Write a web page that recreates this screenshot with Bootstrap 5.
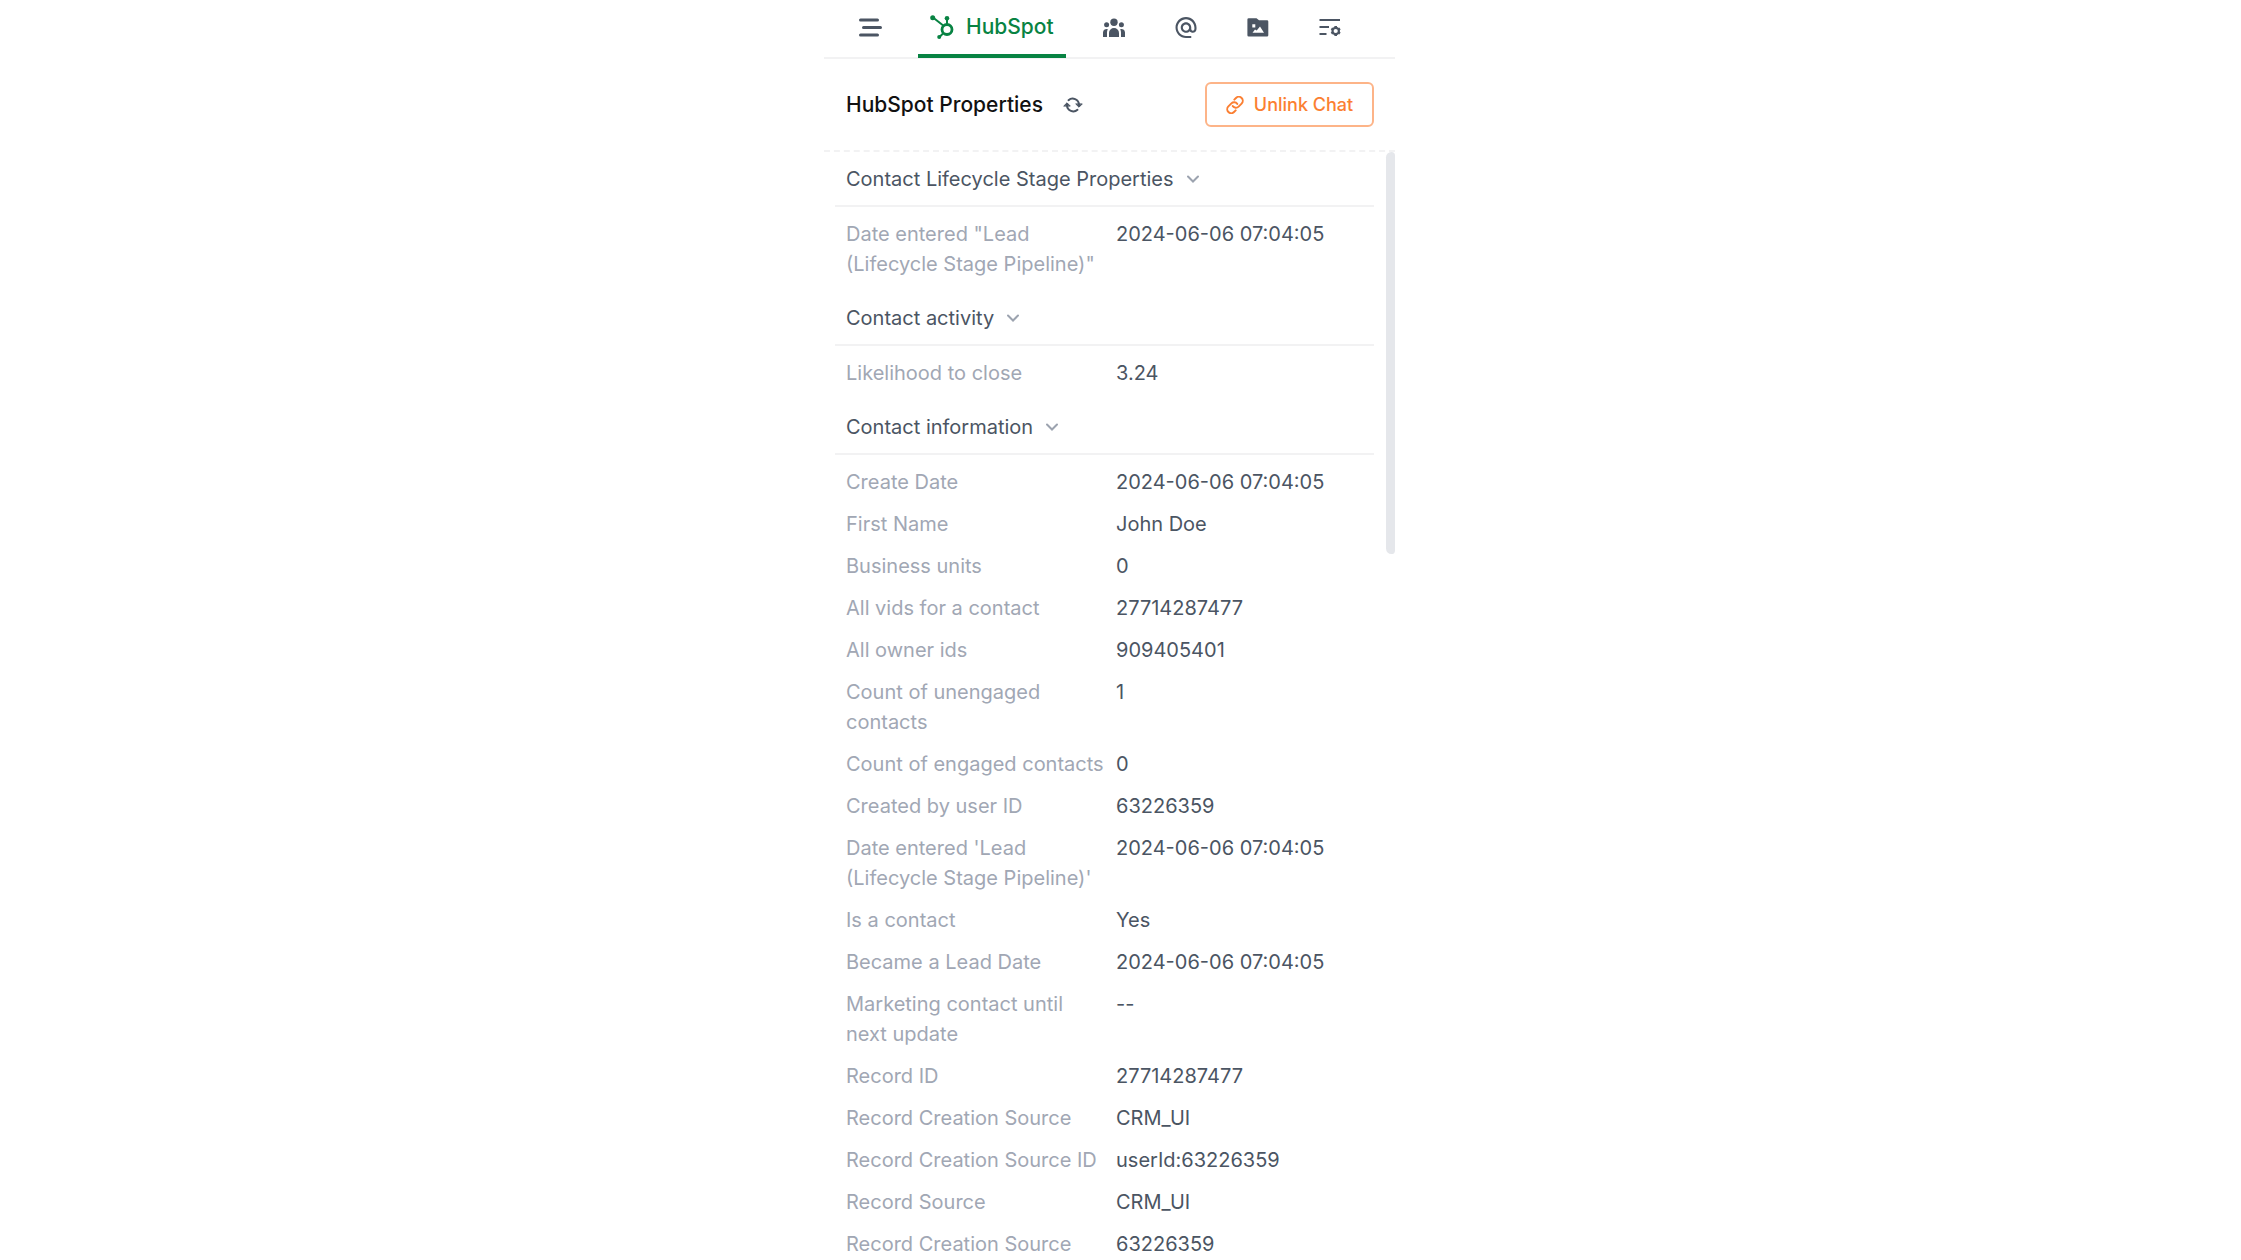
<!DOCTYPE html>
<html lang="en">
<head>
<meta charset="utf-8">
<meta name="viewport" content="width=device-width, initial-scale=1">
<title>HubSpot Properties</title>
<link href="https://cdn.jsdelivr.net/npm/bootstrap@5.3.0/dist/css/bootstrap.min.css" rel="stylesheet">
<style>
  :root { --ink: #4b5563; --muted: #a1a7b4; --line: #f2f2f3; --brand: #088343; --warm: #fb7f32; }
  body { font-family: Inter, "Liberation Sans", sans-serif; font-size: 20px; line-height: 30px; color: var(--ink); background: #fff; }
  .stage { padding-right: 22px; }
  .panel { width: 100%; max-width: 571px; }
  .topbar { padding: 0 22px; height: 59px; gap: 24px; border-bottom: 2px solid var(--line); }
  .tab-btn { border: 0; background: none; color: var(--ink); padding: 0 12px; height: 54px; font-size: 21px; font-weight: 500; }
  .tab-btn svg { width: 24px; height: 24px; display: block; }
  .tab-slot { height: 58px; border-bottom: 4px solid transparent; }
  .tab-slot.current { border-color: var(--brand); }
  .tab-slot.current .tab-btn { color: var(--brand); gap: 12px; }
  .panel-head { height: 93px; padding: 0 21px 0 22px; border-bottom: 2px dashed var(--line); gap: 20px; }
  .panel-title { font-size: 21px; line-height: 30px; color: #111; font-weight: 500; }
  .title-row { gap: 20px; }
  .bare { border: 0; background: none; padding: 0; color: inherit; }
  .unlink { --bs-btn-color: var(--warm); --bs-btn-border-color: #fdb488; --bs-btn-hover-color: #fff; --bs-btn-hover-bg: var(--warm); --bs-btn-border-width: 2px; --bs-btn-border-radius: 6px;
    --bs-btn-font-size: 18px; --bs-btn-font-weight: 500; width: 169px; height: 45px; padding: 0; gap: 10px; }
  .groups { padding-left: 11px; min-width: 0; }
  .group-head { height: 55px; padding: 0 0 0 11px; border-bottom: 2px solid var(--line); font-size: 20px; gap: 13px; }
  .fields { padding: 12px 0 12px 11px; gap: 12px; font-size: 20px; }
  .field-name { width: 270px; padding-right: 8px; color: var(--muted); font-weight: 400; flex: none; }
  .track { width: 9px; margin-left: 12px; flex: none; }
  .thumb { height: 36.3%; background: #e5e7eb; border-radius: 6px 4px 4px 6px; }
</style>
<script src="https://cdn.jsdelivr.net/npm/bootstrap@5.3.0/dist/js/bootstrap.bundle.min.js"></script>
</head>
<body>
<div class="stage d-flex justify-content-center vh-100 overflow-hidden">
<main class="panel d-flex flex-column h-100">
  <nav class="topbar d-flex flex-shrink-0" aria-label="Panel tabs">
    <div class="tab-slot"><button class="tab-btn d-flex align-items-center" type="button" aria-label="Menu">
      <svg viewBox="0 0 24 24" fill="none" stroke="currentColor" stroke-width="3" stroke-linecap="round"><path d="M2.500 5h17M5.500 12.500h17M2.500 20h17"/></svg></button></div>
    <div class="tab-slot current"><button class="tab-btn d-flex align-items-center" type="button" aria-current="page">
      <svg viewBox="0 0 24 24" fill="none" stroke="currentColor"><circle cx="17" cy="14.500" r="5" stroke-width="2.800"/><path d="M17 9V3.500M3 2.500l10.200 8M13 18.500 9.500 22" stroke-width="2"/><g fill="currentColor" stroke="none"><circle cx="17" cy="3.300" r="2.300"/><circle cx="2.700" cy="2.700" r="2.500"/><circle cx="9.200" cy="22" r="2"/></g></svg>
      <span>HubSpot</span></button></div>
    <div class="tab-slot"><button class="tab-btn d-flex align-items-center" type="button" aria-label="Contacts">
      <svg viewBox="0 0 24 24" fill="currentColor"><circle cx="12" cy="7.200" r="3.700"/><circle cx="4.600" cy="9.700" r="2.500"/><circle cx="19.400" cy="9.700" r="2.500"/><path d="M7 22V18a5 5 0 0 1 10 0v4zM1 22V17.500a3.600 3.600 0 0 1 4.900-3.300A6 6 0 0 0 5 17.500v4.500zM23 22V17.500a3.600 3.600 0 0 0-4.900-3.300A6 6 0 0 1 19 17.500v4.500z"/></svg></button></div>
    <div class="tab-slot"><button class="tab-btn d-flex align-items-center" type="button" aria-label="Mentions">
      <svg viewBox="0 0 24 24" fill="currentColor"><path transform="translate(-.6 0) scale(1.05)" d="M12 1.950c-5.520 0-10 4.480-10 10s4.480 10 10 10h5v-2h-5c-4.340 0-8-3.660-8-8s3.660-8 8-8 8 3.660 8 8v1.430c0 .79-.71 1.570-1.500 1.570s-1.500-.78-1.500-1.570v-1.430c0-2.760-2.240-5-5-5s-5 2.240-5 5 2.240 5 5 5c1.380 0 2.640-.56 3.540-1.470.65.89 1.770 1.470 2.960 1.470 1.970 0 3.500-1.600 3.500-3.570v-1.430c0-5.520-4.480-10-10-10zm0 13c-1.660 0-3-1.340-3-3s1.340-3 3-3 3 1.340 3 3-1.340 3-3 3z"/></svg></button></div>
    <div class="tab-slot"><button class="tab-btn d-flex align-items-center" type="button" aria-label="Media">
      <svg viewBox="0 0 24 24" fill="currentColor" fill-rule="evenodd"><path d="M2.700 3.300h7.800l2.500 2H21a1.300 1.300 0 0 1 1.300 1.300V20.300A1.300 1.300 0 0 1 21 21.600H2.700A1.300 1.300 0 0 1 1.400 20.300V4.600A1.300 1.300 0 0 1 2.700 3.300zM6.300 9.300v3.200h3V9.300zM6.500 17.800H18L14 11.500l-3.300 4-1.700-1z"/></svg></button></div>
    <div class="tab-slot"><button class="tab-btn d-flex align-items-center" type="button" aria-label="Field settings">
      <svg viewBox="0 0 24 24" fill="none" stroke="currentColor" stroke-width="2"><path d="M1.500 5h20.500M1.500 12h9.500M1.500 19H8.500"/><circle cx="17.700" cy="16" r="3.200" stroke-width="2.200"/><path d="M17.700 11v2M17.700 19v2M13.400 13.500l1.600 1M20.400 17.500l1.600 1M22 13.500l-1.600 1M15 17.500l-1.600 1" stroke-width="2.600"/></svg></button></div>
  </nav>

  <header class="panel-head d-flex align-items-center justify-content-between flex-shrink-0">
    <div class="title-row d-flex align-items-center">
      <h1 class="panel-title mb-0">HubSpot Properties</h1>
      <button class="bare d-flex" type="button" aria-label="Refresh">
        <svg width="20" height="20" viewBox="0 0 20 20" fill="none" stroke="currentColor" stroke-width="2" stroke-linecap="round" stroke-linejoin="round"><path d="M5.500 5.200A6.300 6.300 0 0 1 16 9.500M14.500 14.800A6.300 6.300 0 0 1 4 10.500"/><path fill="currentColor" stroke-width="1" d="M1 10.800 4 7.800l3 3zM13 9.200l3 3 3-3z"/></svg></button>
    </div>
    <button class="btn unlink d-flex align-items-center justify-content-center" type="button">
      <svg width="18" height="18" viewBox="0 0 24 24" fill="none" stroke="currentColor" stroke-width="2.600" stroke-linecap="round" stroke-linejoin="round"><path d="M9 13.500a5.200 5.200 0 0 0 7.800.6l4-4a5.300 5.300 0 0 0-7.500-7.500l-2.200 2.200M15 10.500a5.200 5.200 0 0 0-7.800-.6l-4 4a5.300 5.300 0 0 0 7.500 7.500l2.200-2.200"/></svg>
      <span>Unlink Chat</span></button>
  </header>

  <div class="d-flex flex-grow-1 overflow-hidden">
    <div class="groups flex-grow-1">
      <section>
        <button class="bare group-head d-flex align-items-center w-100" type="button" aria-expanded="true">Contact Lifecycle Stage Properties
          <svg width="12" height="8" viewBox="0 0 12 8" fill="none" stroke="#9ca3af" stroke-width="2" stroke-linecap="round"><path d="M1 1.500l5 5 5-5"/></svg></button>
        <dl class="fields d-flex flex-column mb-0">
          <div class="d-flex"><dt class="field-name">Date entered "Lead (Lifecycle Stage Pipeline)"</dt><dd class="mb-0">2024-06-06 07:04:05</dd></div>
        </dl>
      </section>
      <section>
        <button class="bare group-head d-flex align-items-center w-100" type="button" aria-expanded="true">Contact activity
          <svg width="12" height="8" viewBox="0 0 12 8" fill="none" stroke="#9ca3af" stroke-width="2" stroke-linecap="round"><path d="M1 1.500l5 5 5-5"/></svg></button>
        <dl class="fields d-flex flex-column mb-0">
          <div class="d-flex"><dt class="field-name">Likelihood to close</dt><dd class="mb-0">3.24</dd></div>
        </dl>
      </section>
      <section>
        <button class="bare group-head d-flex align-items-center w-100" type="button" aria-expanded="true">Contact information
          <svg width="12" height="8" viewBox="0 0 12 8" fill="none" stroke="#9ca3af" stroke-width="2" stroke-linecap="round"><path d="M1 1.500l5 5 5-5"/></svg></button>
        <dl class="fields d-flex flex-column mb-0">
          <div class="d-flex"><dt class="field-name">Create Date</dt><dd class="mb-0">2024-06-06 07:04:05</dd></div>
          <div class="d-flex"><dt class="field-name">First Name</dt><dd class="mb-0">John Doe</dd></div>
          <div class="d-flex"><dt class="field-name">Business units</dt><dd class="mb-0">0</dd></div>
          <div class="d-flex"><dt class="field-name">All vids for a contact</dt><dd class="mb-0">27714287477</dd></div>
          <div class="d-flex"><dt class="field-name">All owner ids</dt><dd class="mb-0">909405401</dd></div>
          <div class="d-flex"><dt class="field-name">Count of unengaged contacts</dt><dd class="mb-0">1</dd></div>
          <div class="d-flex"><dt class="field-name">Count of engaged contacts</dt><dd class="mb-0">0</dd></div>
          <div class="d-flex"><dt class="field-name">Created by user ID</dt><dd class="mb-0">63226359</dd></div>
          <div class="d-flex"><dt class="field-name">Date entered 'Lead (Lifecycle Stage Pipeline)'</dt><dd class="mb-0">2024-06-06 07:04:05</dd></div>
          <div class="d-flex"><dt class="field-name">Is a contact</dt><dd class="mb-0">Yes</dd></div>
          <div class="d-flex"><dt class="field-name">Became a Lead Date</dt><dd class="mb-0">2024-06-06 07:04:05</dd></div>
          <div class="d-flex"><dt class="field-name">Marketing contact until next update</dt><dd class="mb-0">--</dd></div>
          <div class="d-flex"><dt class="field-name">Record ID</dt><dd class="mb-0">27714287477</dd></div>
          <div class="d-flex"><dt class="field-name">Record Creation Source</dt><dd class="mb-0">CRM_UI</dd></div>
          <div class="d-flex"><dt class="field-name">Record Creation Source ID</dt><dd class="mb-0">userId:63226359</dd></div>
          <div class="d-flex"><dt class="field-name">Record Source</dt><dd class="mb-0">CRM_UI</dd></div>
          <div class="d-flex"><dt class="field-name">Record Creation Source</dt><dd class="mb-0">63226359</dd></div>
        </dl>
      </section>
    </div>
    <div class="track" aria-hidden="true"><div class="thumb"></div></div>
  </div>
</main>
</div>
</body>
</html>
